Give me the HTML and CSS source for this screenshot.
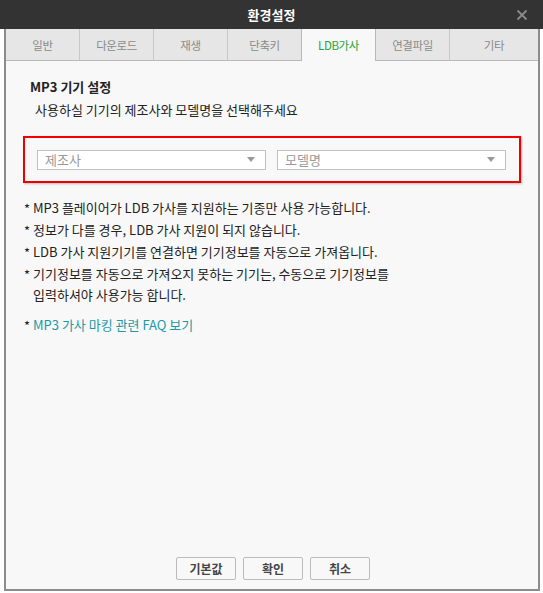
FILE: index.html
```html
<!DOCTYPE html>
<html>
<head>
    <title>환경설정</title>
    <link rel="stylesheet" href="styles.css">
</head>
<body>
    <div class="titlebar">
        <span class="title">환경설정</span>
        <svg class="close" width="12" height="12" viewBox="0 0 12 12">
            <path d="M1.5 1.5 L10.5 10.5 M10.5 1.5 L1.5 10.5" stroke="#8a8a8a" stroke-width="1.8" fill="none"/>
        </svg>
    </div>
    <div class="window">
        <div class="tabs">
            <div class="tab">일반</div>
            <div class="tab">다운로드</div>
            <div class="tab">재생</div>
            <div class="tab">단축키</div>
            <div class="tab active">LDB가사</div>
            <div class="tab">연결파일</div>
            <div class="tab last">기타</div>
        </div>
        <div class="content">
            <h3 class="section-title">MP3 기기 설정</h3>
            <p class="section-desc">사용하실 기기의 제조사와 모델명을 선택해주세요</p>
            <div class="select-box">
                <div class="select">
                    <span>제조사</span>
                    <span class="arrow"></span>
                </div>
                <div class="select">
                    <span>모델명</span>
                    <span class="arrow"></span>
                </div>
            </div>
            <ul class="notes">
                <li>MP3 플레이어가 LDB 가사를 지원하는 기종만 사용 가능합니다.</li>
                <li>정보가 다를 경우, LDB 가사 지원이 되지 않습니다.</li>
                <li>LDB 가사 지원기기를 연결하면 기기정보를 자동으로 가져옵니다.</li>
                <li>기기정보를 자동으로 가져오지 못하는 기기는, 수동으로 기기정보를<br>입력하셔야 사용가능 합니다.</li>
            </ul>
            <ul class="notes faq">
                <li><a href="#">MP3 가사 마킹 관련 FAQ 보기</a></li>
            </ul>
        </div>
        <div class="buttons">
            <button type="button">기본값</button>
            <button type="button">확인</button>
            <button type="button">취소</button>
        </div>
    </div>
</body>
</html>
```

FILE: styles.css
```css
body {
    margin: 0;
    padding: 0;
    width: 543px;
    height: 593px;
    background-color: #ffffff;
    font-family: "Noto Sans CJK KR", "Noto Sans", sans-serif;
    font-size: 13px;
    color: #222;
}
.titlebar {
    height: 29px;
    background-color: #333333;
    display: flex;
    justify-content: center;
    align-items: center;
    position: relative;
}
.title {
    color: #ffffff;
    font-size: 13px;
    font-weight: bold;
}
.close {
    position: absolute;
    right: 15px;
    top: 9px;
}
.window {
    margin: 0 3px 0 4px;
    height: 560px;
    border: 2px solid #8c8c8c;
    border-top: none;
    background-color: #f8f8f8;
    display: flex;
    flex-direction: column;
}
.tabs {
    display: flex;
    height: 32px;
}
.tab {
    width: 73px;
    display: flex;
    justify-content: center;
    align-items: center;
    background-color: #e6e6e6;
    color: #8a8a8a;
    border-right: 1px solid #c8c8c8;
    border-bottom: 1px solid #b8b8b8;
    font-size: 11.5px;
    letter-spacing: -0.4px;
}
.tab.last {
    flex: 1;
    border-right: none;
}
.tab.active {
    background-color: #f8f8f8;
    color: #1fa53a;
    border-bottom: none;
    border-left: 1px solid #b8b8b8;
    border-right: 1px solid #b8b8b8;
    margin-left: -1px;
}
.content {
    flex: 1;
    padding: 18px 0 0 17px;
}
.section-title {
    margin: 0;
    font-size: 13px;
    font-weight: bold;
    line-height: 16px;
    padding-left: 7px;
}
.section-desc {
    margin: 6px 0 0 12px;
    line-height: 18px;
}
.select-box {
    margin: 17px 0 0 0;
    width: 482px;
    height: 43px;
    border: 2px solid #ee0000;
    box-shadow: 1px 1px 2px rgba(0, 0, 0, 0.25);
    display: flex;
    align-items: center;
    gap: 11px;
    padding-left: 12px;
}
.select {
    width: 229px;
    height: 20px;
    border: 1px solid #c0c0c0;
    background-color: #ffffff;
    display: flex;
    justify-content: space-between;
    align-items: center;
    padding: 0 10px 0 7px;
    box-sizing: border-box;
    color: #999;
    font-size: 13px;
}
.arrow {
    width: 0;
    height: 0;
    border-left: 4px solid transparent;
    border-right: 4px solid transparent;
    border-top: 5px solid #999;
}
.notes {
    list-style: none;
    margin: 14px 0 0 0;
    padding: 0 0 0 1px;
}
.notes li {
    line-height: 21px;
    margin-bottom: 1px;
    padding-left: 9px;
    position: relative;
}
.notes li::before {
    content: "*";
    position: absolute;
    left: 0;
    top: 1px;
}
.faq {
    margin-top: 9px;
}
.faq a {
    color: #1a9aa6;
    text-decoration: none;
}
.buttons {
    display: flex;
    justify-content: center;
    gap: 7px;
    padding: 0 0 9px 0;
    margin-left: 2px;
}
button {
    width: 60px;
    height: 23px;
    background-color: #f8f8f8;
    border: 1px solid #bcbcbc;
    border-radius: 2px;
    font-family: "Noto Sans CJK KR", sans-serif;
    font-size: 12px;
    font-weight: bold;
    color: #444;
    padding: 0;
}
```
